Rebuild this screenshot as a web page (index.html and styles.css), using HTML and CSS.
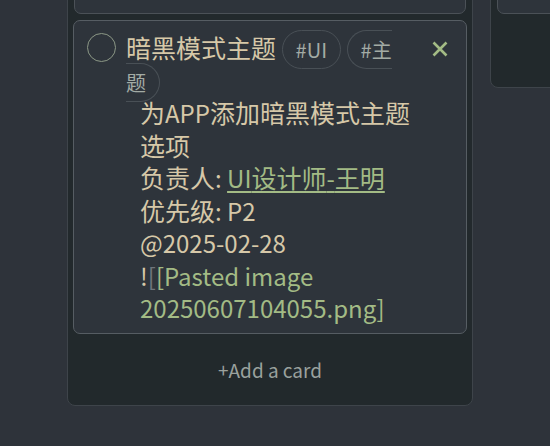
FILE: index.html
```html
<!DOCTYPE html>
<html lang="zh">
<head>
<meta charset="utf-8">
<title>Kanban</title>
<link rel="stylesheet" href="styles.css">
</head>
<body>
<div class="board">
  <section class="lane lane-main">
    <div class="lane-items">
      <div class="card card-prev"></div>
      <div class="card card-main">
        <span class="check"></span>
        <div class="card-body">
          <div class="title">暗黑模式主题 <span class="tag">#UI</span> <span class="tag">#主题</span></div>
          <div class="desc">
            <div>为<span class="lat">APP</span>添加暗黑模式主题选项</div>
            <div>负责人<span class="lat">: </span><a class="link" href="#"><span class="lat">UI</span>设计师<span class="lat">-</span>王明</a></div>
            <div>优先级<span class="lat">: P2</span></div>
            <div><span class="lat">@2025-02-28</span></div>
            <div><span class="lat">!<span class="bracket">[</span><span class="embed">[Pasted image 20250607104055.png]</span></span></div>
          </div>
        </div>
        <button class="close" type="button" aria-label="close">
          <svg viewBox="0 0 16 16" width="16" height="16"><path d="M1.5 1.5 L14.5 14.5 M14.5 1.5 L1.5 14.5" stroke="currentColor" stroke-width="2.6" stroke-linecap="butt" fill="none"/></svg>
        </button>
      </div>
    </div>
    <div class="add">+Add a card</div>
  </section>
  <section class="lane lane-side">
    <div class="card card-side"></div>
  </section>
</div>
</body>
</html>
```
FILE: styles.css
```css
html, body {
  margin: 0;
  padding: 0;
  background: #2e333a;
  overflow: hidden;
}
body {
  font-family: "Noto Sans CJK SC", "Noto Sans", sans-serif;
  color: #d6c8a8;
}
.board {
  display: flex;
  align-items: flex-start;
  gap: 17px;
  padding-left: 67px;
  margin-top: -51px;
  overflow: hidden;
}
.lane {
  box-sizing: border-box;
  background: #22292c;
  border: 1px solid #3e444a;
  border-radius: 8px;
  padding: 5px;
  display: flex;
  flex-direction: column;
  gap: 6px;
}
.lane-main {
  width: 406px;
  flex: none;
}
.lane-side {
  width: 120px;
  flex: none;
  height: 139px;
}
.lane-items {
  display: flex;
  flex-direction: column;
  gap: 6px;
}
.card {
  box-sizing: border-box;
  background: #2e343b;
  border: 1px solid #4b5157;
  border-radius: 7px;
}
.card-prev {
  height: 59px;
  margin: 0 1px;
}
.card-side {
  height: 59px;
  margin: 0 1px;
}
.card-main {
  border-color: #565d63;
  display: flex;
  align-items: flex-start;
  gap: 10px;
  padding: 10px 14px 9px 13px;
}
.check {
  flex: none;
  box-sizing: border-box;
  width: 29px;
  height: 29px;
  border: 1px solid #8c9886;
  border-radius: 50%;
  margin-top: 2px;
}
.card-body {
  width: 296px;
  flex: none;
  font-size: 25px;
  line-height: 32.5px;
  margin-right: -12px;
}
.title {
  margin-right: 26px;
}
.tag {
  font-size: 20px;
  line-height: 1;
  color: #a3aba5;
  border: 1px solid #495056;
  border-radius: 20px;
  padding: 4px 13px;
}
.desc {
  margin-left: 14px;
}
.lat {
  font-size: 24px;
  line-height: 1;
}
.link {
  color: #a3bb85;
  text-decoration: underline;
  text-underline-offset: 3px;
  text-decoration-thickness: 2px;
}
.bracket {
  color: #6f767c;
}
.embed {
  color: #a3bb85;
}
.close {
  flex: none;
  margin-left: 8px;
  width: 24px;
  height: 24px;
  margin-top: 6px;
  padding: 0;
  border: 0;
  background: transparent;
  color: #a3bb85;
  display: flex;
  align-items: center;
  justify-content: center;
}
.add {
  height: 60px;
  display: flex;
  align-items: center;
  justify-content: center;
  font-size: 19px;
  color: #9aa19e;
}
```
